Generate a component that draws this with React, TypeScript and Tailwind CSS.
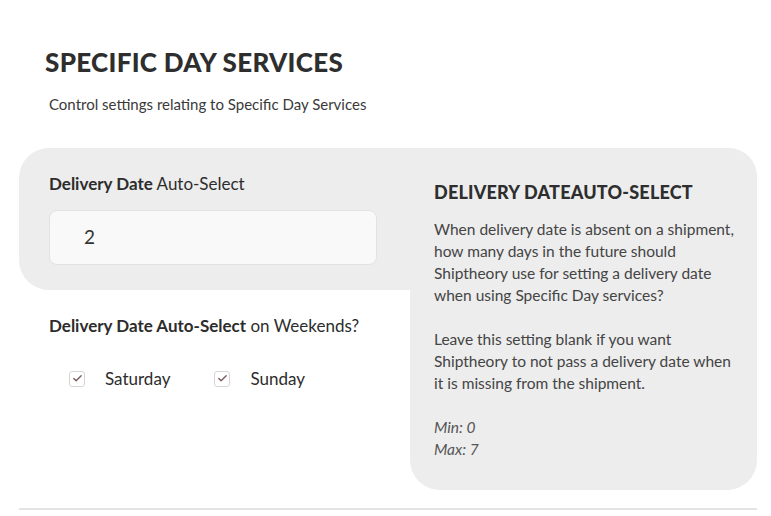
import { Check } from 'lucide-react'

const FONT = "font-['Lato','Open_Sans',sans-serif]"

function Tick({ label }: { label: string }) {
  return (
    <label className="flex items-center gap-[20px]">
      <span className="flex h-[16px] w-[16px] items-center justify-center rounded-[3px] border border-[#d9d4d4] bg-white">
        <Check size={11} strokeWidth={3} className="text-[#7b5a5e]" />
      </span>
      <span className="text-[17px] text-[#2c2c2c]">{label}</span>
    </label>
  )
}

export default function App() {
  return (
    <div className={`${FONT} min-h-[516px] w-[771px] bg-white pb-2 text-[#333]`}>
      <div className="px-[45px] pt-[46px]">
        <h1 className="text-[26px] font-black leading-[32px] tracking-[0.3px] text-[#2e2e2e]">SPECIFIC DAY SERVICES</h1>
        <p className="mt-[16px] pl-[4px] text-[15px] leading-[20px] text-[#3a3a3a]">
          Control settings relating to Specific Day Services
        </p>
      </div>

      <div className="ml-[19px] mt-[34px] flex w-[738px] items-start">
        <div className="flex w-[391px] shrink-0 flex-col">
          <div className="rounded-l-[30px] bg-[#ededed] pb-[25px] pl-[30px] pt-[25px]">
            <div className="text-[17px] leading-[22px] text-[#2c2c2c]">
              <span className="font-bold">Delivery Date</span> Auto-Select
            </div>
            <div className="mt-[15px] flex h-[55px] w-[328px] items-center rounded-[8px] border border-[#e2e2e2] bg-[#f9f9f9] pl-[34px] text-[19px] text-[#333]">
              2
            </div>
          </div>

          <div className="pl-[30px] pt-[25px]">
            <div className="text-[17px] leading-[22px] text-[#2c2c2c]">
              <span className="font-bold">Delivery Date Auto-Select</span> on Weekends?
            </div>
            <div className="mt-[29px] flex items-center gap-[44px] pl-[20px]">
              <Tick label="Saturday" />
              <Tick label="Sunday" />
            </div>
          </div>
        </div>

        <div className="w-[347px] shrink-0 rounded-b-[30px] rounded-tr-[28px] bg-[#ededed] pb-[30px] pl-[24px] pr-[23px] pt-[32px]">
          <h2 className="text-[18px] font-black leading-[24px] tracking-[0.2px] text-[#2e2e2e]">DELIVERY DATEAUTO-SELECT</h2>
          <div className="mt-[14px] text-[15.5px] leading-[22px] text-[#444]">
            <p>
              When delivery date is absent on a shipment, how many days in the future should Shiptheory use for
              setting a delivery date when using Specific Day services?
            </p>
            <p className="mt-[22px]">
              Leave this setting blank if you want Shiptheory to not pass a delivery date when it is missing from the
              shipment.
            </p>
            <p className="mt-[22px] italic text-[#555]">
              Min: 0
              <br />
              Max: 7
            </p>
          </div>
        </div>
      </div>

      <div className="ml-[19px] mt-[18px] h-[2px] w-[738px] bg-[#e3e3e3]" />
    </div>
  )
}
